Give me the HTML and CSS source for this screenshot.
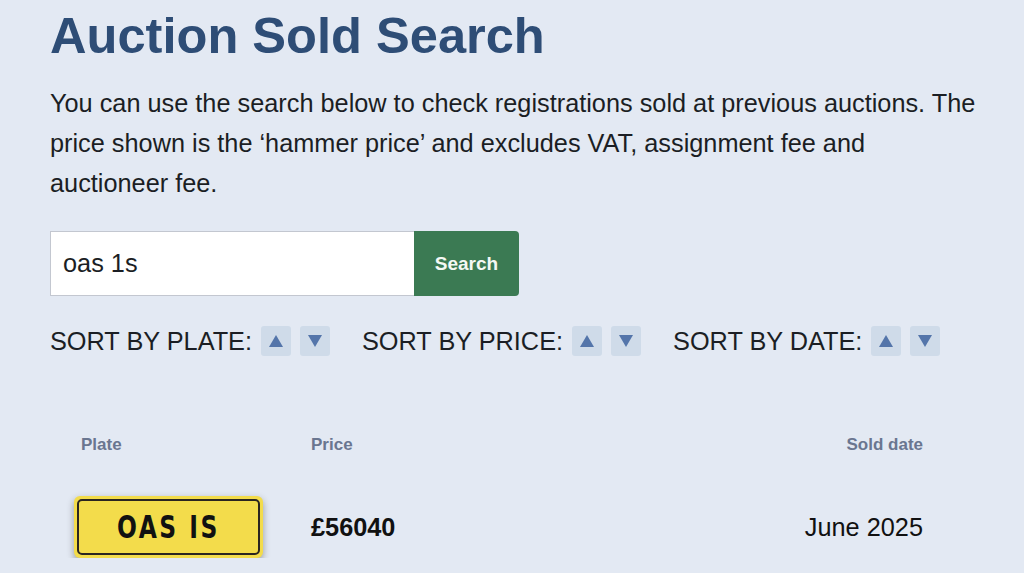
FILE: index.html
```html
<!DOCTYPE html>
<html lang="en">
<head>
<meta charset="utf-8">
<title>Auction Sold Search</title>
<link rel="stylesheet" href="styles.css">
</head>
<body>
<main class="page">
  <h1 class="title">Auction Sold Search</h1>
  <p class="intro">You can use the search below to check registrations sold at previous auctions. The price shown is the ‘hammer price’ and excludes VAT, assignment fee and auctioneer fee.</p>

  <form class="search">
    <input class="search-input" type="text" value="oas 1s">
    <button class="search-btn" type="button">Search</button>
  </form>

  <div class="sort-row">
    <div class="sort-group">
      <span class="sort-label">SORT BY PLATE:</span>
      <button class="sort-btn" type="button"><svg viewBox="0 0 16 14" width="16" height="14"><path d="M8 1 L15 13 L1 13 Z"/></svg></button>
      <button class="sort-btn" type="button"><svg viewBox="0 0 16 14" width="16" height="14"><path d="M1 1 L15 1 L8 13 Z"/></svg></button>
    </div>
    <div class="sort-group">
      <span class="sort-label">SORT BY PRICE:</span>
      <button class="sort-btn" type="button"><svg viewBox="0 0 16 14" width="16" height="14"><path d="M8 1 L15 13 L1 13 Z"/></svg></button>
      <button class="sort-btn" type="button"><svg viewBox="0 0 16 14" width="16" height="14"><path d="M1 1 L15 1 L8 13 Z"/></svg></button>
    </div>
    <div class="sort-group">
      <span class="sort-label">SORT BY DATE:</span>
      <button class="sort-btn" type="button"><svg viewBox="0 0 16 14" width="16" height="14"><path d="M8 1 L15 13 L1 13 Z"/></svg></button>
      <button class="sort-btn" type="button"><svg viewBox="0 0 16 14" width="16" height="14"><path d="M1 1 L15 1 L8 13 Z"/></svg></button>
    </div>
  </div>

  <table class="results">
    <thead>
      <tr>
        <th class="col-plate">Plate</th>
        <th class="col-price">Price</th>
        <th class="col-date">Sold date</th>
      </tr>
    </thead>
    <tbody>
      <tr>
        <td class="col-plate"><div class="plate"><span class="plate-inner"><span class="plate-text">OAS IS</span></span></div></td>
        <td class="col-price price">£56040</td>
        <td class="col-date date">June 2025</td>
      </tr>
    </tbody>
  </table>
</main>
</body>
</html>
```

FILE: styles.css
```css
html, body {
  margin: 0;
  padding: 0;
  background: #e3e9f3;
  font-family: "Liberation Sans", Arial, sans-serif;
  color: #1b1e24;
}

.page {
  padding: 6px 0 0 50px;
  width: 930px;
}

.title {
  margin: 0;
  font-size: 50.6px;
  line-height: 60px;
  font-weight: 700;
  color: #2e4d76;
}

.intro {
  margin: 17px 0 0;
  font-size: 25.3px;
  line-height: 40px;
  color: #1b1e24;
}

.search {
  display: flex;
  margin-top: 28px;
  width: 469px;
  height: 65px;
}

.search-input {
  box-sizing: border-box;
  flex: 1;
  height: 65px;
  margin: 0;
  padding: 0 12px;
  border: 1px solid #c3c7d0;
  border-right: none;
  background: #fff;
  font-family: "Liberation Sans", Arial, sans-serif;
  font-size: 25.3px;
  color: #1b1e24;
  outline: none;
}

.search-btn {
  width: 105px;
  height: 65px;
  margin: 0;
  border: none;
  border-radius: 0 4px 4px 0;
  background: #3b7a53;
  color: #f4f8f4;
  font-family: "Liberation Sans", Arial, sans-serif;
  font-size: 19px;
  font-weight: 700;
}

.sort-row {
  display: flex;
  align-items: center;
  gap: 32px;
  margin-top: 30px;
  height: 30px;
}

.sort-group {
  display: flex;
  align-items: center;
  gap: 9px;
}

.sort-label {
  font-size: 25.3px;
  line-height: 30px;
  color: #1b1e24;
}

.sort-btn {
  display: flex;
  align-items: center;
  justify-content: center;
  width: 30px;
  height: 30px;
  padding: 0;
  border: none;
  border-radius: 3px;
  background: #cfdbe9;
}

.sort-btn svg {
  fill: #5475aa;
}

.results {
  width: 893px;
  margin: 74px 0 0 -20px;
  border-collapse: collapse;
}

.results th {
  padding: 0;
  height: 30px;
  font-size: 17px;
  font-weight: 700;
  color: #6a7690;
  text-align: left;
}

.results th.col-plate {
  padding-left: 51px;
  width: 230px;
}

.results th.col-date,
.results td.col-date {
  text-align: right;
}

.results td {
  padding: 36px 0 0;
  vertical-align: middle;
}

.results td.col-plate {
  padding-left: 44px;
}

.plate {
  box-sizing: border-box;
  width: 189px;
  height: 62px;
  padding: 3px;
  border-radius: 6px;
  background: #f3dc4b;
  box-shadow: 0 3px 7px rgba(40, 40, 30, 0.4);
}

.plate-inner {
  box-sizing: border-box;
  display: flex;
  align-items: center;
  justify-content: center;
  height: 100%;
  border: 2px solid #2a2520;
  border-radius: 5px;
}

.plate-text {
  font-family: "DejaVu Sans Condensed", "Liberation Sans Narrow", sans-serif;
  font-weight: 700;
  font-size: 26px;
  letter-spacing: 2.5px;
  color: #111;
  transform: scaleY(1.2);
}

.price {
  font-size: 25.3px;
  font-weight: 700;
  color: #111;
}

.date {
  font-size: 25.3px;
  color: #111;
}
```
